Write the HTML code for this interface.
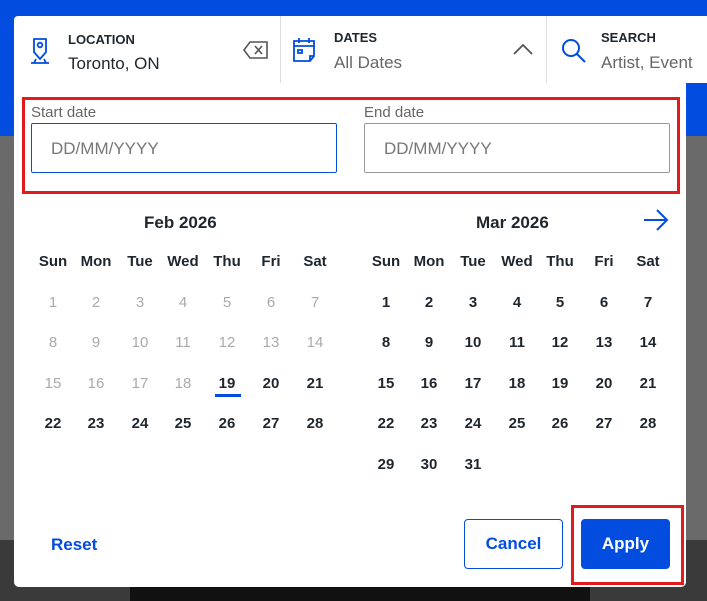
<!DOCTYPE html>
<html><head><style>
*{margin:0;padding:0;box-sizing:border-box}
body{width:707px;height:601px;position:relative;overflow:hidden;font-family:"Liberation Sans",sans-serif;background:#6a6a6a}
.a{position:absolute}
.blue{left:0;top:0;width:707px;height:136px;background:#024ddf}
.hdr{left:14px;top:16px;width:693px;height:67px;background:#fff;border-radius:4px 0 0 0}
.lab{font-size:13px;font-weight:bold;color:#1f262d}
.val{font-size:17px}
.sep{width:1px;height:67px;top:16px;background:#ddd}
.panel{left:14px;top:83px;width:672px;height:504px;background:#fff;border-radius:0 0 5px 5px}
.red{border:3px solid #e31a1c}
.inp{height:50px;border:1px solid #999;border-radius:2px;font-size:17px;color:#777;padding:15px 0 0 19px}
.d{position:absolute;width:40px;text-align:center;font-size:15px;font-weight:bold;color:#1f262d;transform:translate(-20px,-7px)}
.g{color:#aaa;font-weight:normal}
.h{font-size:15px;font-weight:bold}
</style></head><body>
<div class="a blue"></div>
<div class="a" style="left:0;top:540px;width:707px;height:61px;background:#3a3a3a"></div>
<div class="a" style="left:130px;top:560px;width:460px;height:41px;background:#111"></div>
<div class="a hdr"></div>
<div class="a sep" style="left:280px"></div>
<div class="a sep" style="left:546px"></div>
<svg class="a" style="left:28px;top:36px" width="26" height="30" viewBox="0 0 26 30" fill="none" stroke="#024ddf" stroke-width="1.8"><path d="M6 3h12v13l-6 7-6-7z"/><circle cx="12" cy="9" r="2.3"/><path d="M3 27h18M6 27l2-4M18 27l-2-4"/></svg>
<div class="a lab" style="left:68px;top:32px">LOCATION</div>
<div class="a val" style="left:68px;top:54px;color:#1f262d">Toronto, ON</div>
<svg class="a" style="left:243px;top:41px" width="26" height="18" viewBox="0 0 26 18" fill="none" stroke="#555" stroke-width="1.6"><path d="M7 1h17v16H7L1 9z"/><path d="M12 5l7 8M19 5l-7 8"/></svg>
<svg class="a" style="left:292px;top:36px" width="26" height="28" viewBox="0 0 26 28" fill="none" stroke="#024ddf" stroke-width="1.8"><path d="M2 5h20v15l-4 5H2z"/><path d="M2 10h20M7 2v5M17 2v5M6 14h4v3H6zM18 25v-5h4"/></svg>
<div class="a lab" style="left:334px;top:30px">DATES</div>
<div class="a val" style="left:334px;top:53px;color:#666">All Dates</div>
<svg class="a" style="left:512px;top:42px" width="22" height="14" viewBox="0 0 22 14" fill="none" stroke="#555" stroke-width="1.8"><path d="M2 12l9-9 9 9"/></svg>
<svg class="a" style="left:560px;top:37px" width="28" height="28" viewBox="0 0 28 28" fill="none" stroke="#024ddf" stroke-width="2"><circle cx="11" cy="11" r="8"/><path d="M17 17l8 8"/></svg>
<div class="a lab" style="left:601px;top:30px">SEARCH</div>
<div class="a val" style="left:601px;top:53px;color:#666;white-space:nowrap">Artist, Event</div>
<div class="a panel"></div>
<div class="a red" style="left:22px;top:97px;width:658px;height:97px"></div>
<div class="a" style="left:31px;top:104px;font-size:15px;color:#666">Start date</div>
<div class="a" style="left:364px;top:104px;font-size:15px;color:#666">End date</div>
<div class="a inp" style="left:31px;top:123px;width:306px;border-color:#024ddf">DD/MM/YYYY</div>
<div class="a inp" style="left:364px;top:123px;width:306px">DD/MM/YYYY</div>
<div class="a h" style="left:144px;top:213px;font-size:17px;color:#1f262d">Feb 2026</div>
<div class="a h" style="left:476px;top:213px;font-size:17px;color:#1f262d">Mar 2026</div>
<svg class="a" style="left:643px;top:209px" width="26" height="22" viewBox="0 0 26 22" fill="none" stroke="#024ddf" stroke-width="2"><path d="M1 11h23M14 1l10 10-10 10"/></svg>
<div class="a" style="left:215px;top:394px;width:26px;height:3px;background:#024ddf"></div>
<div id="cal"></div>
<div class="a" style="left:51px;top:535px;font-size:17px;font-weight:bold;color:#024ddf">Reset</div>
<div class="a" style="left:464px;top:519px;width:99px;height:50px;border:1px solid #024ddf;border-radius:4px;color:#024ddf;font-size:17px;font-weight:bold;text-align:center;line-height:48px">Cancel</div>
<div class="a red" style="left:571px;top:505px;width:113px;height:80px"></div>
<div class="a" style="left:581px;top:519px;width:89px;height:50px;background:#024ddf;border-radius:4px;color:#fff;font-size:17px;font-weight:bold;text-align:center;line-height:50px">Apply</div>
<script>
var c=document.getElementById('cal'),h='';
var fx=[53,96,140,183,227,271,315],mx=[386,429,473,517,560,604,648],ry=[301,341,382,422,463],dn=['Sun','Mon','Tue','Wed','Thu','Fri','Sat'];
for(var i=0;i<7;i++){h+='<div class="d" style="left:'+fx[i]+'px;top:260px">'+dn[i]+'</div><div class="d" style="left:'+mx[i]+'px;top:260px">'+dn[i]+'</div>';}
for(var d=1;d<=28;d++){var k=d-1;h+='<div class="d'+(d<19?' g':'')+'" style="left:'+fx[k%7]+'px;top:'+ry[Math.floor(k/7)]+'px">'+d+'</div>';}
for(var d=1;d<=31;d++){var k=d-1;h+='<div class="d" style="left:'+mx[k%7]+'px;top:'+ry[Math.floor(k/7)]+'px">'+d+'</div>';}
c.innerHTML=h;
</script>
</body></html>
